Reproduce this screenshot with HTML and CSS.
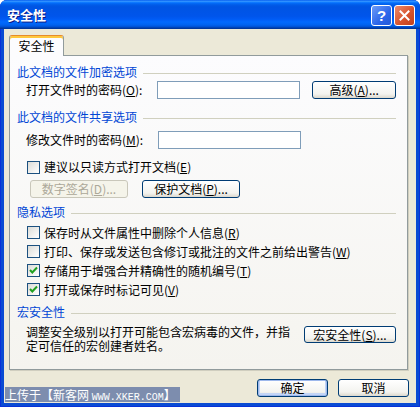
FILE: index.html
```html
<!DOCTYPE html>
<html>
<head>
    <meta charset="utf-8">
    <title>安全性</title>
    <link rel="stylesheet" href="styles.css">
</head>
<body>
    <div class="window">
        <div class="titlebar">
            <span class="title">安全性</span>
            <div class="title-buttons">
                <span class="tb-btn help">?</span>
                <span class="tb-btn close">
                    <svg width="11" height="11" viewBox="0 0 11 11"><path d="M1.5 1.5 L9.5 9.5 M9.5 1.5 L1.5 9.5" stroke="#fff" stroke-width="2" stroke-linecap="square"/></svg>
                </span>
            </div>
        </div>

        <div class="client">
            <div class="tabs">
                <div class="tab active">安全性</div>
            </div>

            <div class="panel">
                <div class="group-title">此文档的文件加密选项</div>
                <div class="row field-row r1">
                    <label class="field-label">打开文件时的密码(<u>O</u>):</label>
                    <input type="password" class="textbox">
                    <button class="btn btn-adv">高级(<u>A</u>)...</button>
                </div>

                <div class="group-title g2">此文档的文件共享选项</div>
                <div class="row field-row r2">
                    <label class="field-label">修改文件时的密码(<u>M</u>):</label>
                    <input type="password" class="textbox">
                </div>
                <div class="row check-row r3">
                    <span class="check"></span>建议以只读方式打开文档(<u>E</u>)
                </div>
                <div class="row btn-row">
                    <button class="btn btn-wide" disabled>数字签名(<u>D</u>)...</button>
                    <button class="btn btn-wide btn-protect">保护文档(<u>P</u>)...</button>
                </div>

                <div class="group-title g3">隐私选项</div>
                <div class="checks">
                    <div class="row check-row">
                        <span class="check"></span>保存时从文件属性中删除个人信息(<u>R</u>)
                    </div>
                    <div class="row check-row">
                        <span class="check"></span>打印、保存或发送包含修订或批注的文件之前给出警告(<u>W</u>)
                    </div>
                    <div class="row check-row">
                        <span class="check checked"><svg width="11" height="11" viewBox="0 0 11 11"><path d="M2 5 L4.3 7.5 L9 2.5" fill="none" stroke="#21A121" stroke-width="2"/></svg></span>存储用于增强合并精确性的随机编号(<u>T</u>)
                    </div>
                    <div class="row check-row">
                        <span class="check checked"><svg width="11" height="11" viewBox="0 0 11 11"><path d="M2 5 L4.3 7.5 L9 2.5" fill="none" stroke="#21A121" stroke-width="2"/></svg></span>打开或保存时标记可见(<u>V</u>)
                    </div>
                </div>

                <div class="group-title g4">宏安全性</div>
                <div class="row macro-row">
                    <p class="macro-text">调整安全级别以打开可能包含宏病毒的文件，并指<br>定可信任的宏创建者姓名。</p>
                    <button class="btn btn-macro">宏安全性(<u>S</u>)...</button>
                </div>
            </div>

            <div class="footer">
                <button class="btn btn-dialog btn-default">确定</button>
                <button class="btn btn-dialog">取消</button>
            </div>
        </div>

        <div class="watermark">上传于【新客网 <span class="latin">WWW.XKER.COM</span>】</div>
    </div>
</body>
</html>
```

FILE: styles.css
```css
body {
    margin: 0;
    background: #fff;
    font-family: "Noto Sans CJK SC", sans-serif;
    font-size: 12px;
    color: #000;
}
.window {
    position: relative;
    width: 420px;
    height: 407px;
    display: flex;
    flex-direction: column;
    background: #0A4BD3;
    border-radius: 7px 7px 0 0;
    overflow: hidden;
    box-shadow: inset 1px 0 0 #0831D9, inset -1px 0 0 #0831D9, inset 0 -1px 0 #0831D9;
}
.titlebar {
    height: 29px;
    display: flex;
    align-items: flex-start;
    padding: 0 5px 0 7px;
    background: linear-gradient(to bottom, #0058EE 0%, #3593FF 4%, #288EFF 6%, #127DFF 8%, #036FFC 10%, #0262EE 14%, #0057E5 20%, #0054E3 24%, #0055EB 56%, #005BF5 66%, #026AFE 76%, #0062EF 86%, #0052D6 92%, #0040AB 96%, #003092 100%);
}
.title {
    flex: 1;
    color: #fff;
    font-weight: bold;
    font-size: 13px;
    line-height: 29px;
    text-shadow: 1px 1px 0 #0A1883;
}
.title-buttons {
    display: flex;
    gap: 2px;
    padding-top: 5px;
}
.tb-btn {
    width: 21px;
    height: 21px;
    box-sizing: border-box;
    border: 1px solid #fff;
    border-radius: 3px;
    display: flex;
    align-items: center;
    justify-content: center;
}
.help {
    background: linear-gradient(135deg, #6D9CF8, #2C66EA 60%, #2359D8);
    color: #fff;
    font-family: "Liberation Sans", sans-serif;
    font-weight: bold;
    font-size: 15px;
    line-height: 19px;
}
.close {
    background: linear-gradient(135deg, #EC8A6C, #D8542E 55%, #C0401C);
}
.client {
    flex: 1;
    margin: 0 4px 4px;
    padding: 6px 8px 0 5px;
    background: #ECE9D8;
    display: flex;
    flex-direction: column;
}
.tabs {
    display: flex;
    height: 20px;
}
.tab {
    position: relative;
    z-index: 1;
    width: 55px;
    height: 21px;
    box-sizing: border-box;
    border: 1px solid #919B9C;
    border-top: 1px solid #E68B2C;
    border-bottom: none;
    border-radius: 3px 3px 0 0;
    background: #FCFCFE;
    box-shadow: inset 0 2px 0 #FFC83C;
    text-align: center;
    line-height: 20px;
}
.panel {
    height: 315px;
    box-sizing: border-box;
    border: 1px solid #919B9C;
    background: linear-gradient(to bottom, #FCFCFE, #F5F4EF);
    box-shadow: 1px 1px 0 #D0CEBF;
    padding: 9px 11px 0 7px;
}
.group-title {
    display: flex;
    align-items: center;
    height: 14px;
    line-height: 14px;
    color: #0046D5;
}
.group-title::after {
    content: "";
    flex: 1;
    margin: 2px 0 0 6px;
    border-top: 1px solid #D0D0BF;
}
.g2 { margin-top: 11px; }
.g3 { margin-top: 7px; }
.g4 { margin-top: 6px; }
.row {
    display: flex;
    align-items: center;
}
.field-row {
    height: 18px;
    padding-left: 9px;
}
.r1 { margin-top: 2px; }
.r2 { margin-top: 7px; }
.field-label {
    width: 132px;
    line-height: 14px;
}
.textbox {
    width: 143px;
    height: 18px;
    box-sizing: border-box;
    margin: 0;
    padding: 0 2px;
    border: 1px solid #7F9DB9;
    background: #fff;
}
.btn {
    height: 18px;
    box-sizing: border-box;
    margin: 0;
    padding: 0;
    border: 1px solid #003C74;
    border-radius: 3px;
    background: linear-gradient(to bottom, #FFFFFF, #F3F3EF 75%, #DCD8CD);
    font-family: inherit;
    font-size: 12px;
    line-height: 16px;
    color: #000;
}
.btn:disabled {
    border-color: #C9C7BA;
    background: #F5F4EA;
    color: #ACA899;
}
.btn-adv {
    width: 84px;
    margin-left: 12px;
}
.check-row {
    height: 19px;
    padding-left: 10px;
    line-height: 14px;
}
.r3 {
    height: 18px;
    margin-top: 9px;
}
.check {
    width: 13px;
    height: 13px;
    box-sizing: border-box;
    margin-right: 4px;
    border: 1px solid #1C5180;
    background: linear-gradient(135deg, #DCDCD7, #FFFFFF);
    display: flex;
    align-items: center;
    justify-content: center;
}
.btn-row {
    height: 18px;
    margin-top: 4px;
    padding-left: 13px;
}
.btn-wide {
    width: 98px;
}
.btn-protect {
    margin-left: 14px;
}
.checks {
    margin-top: 4px;
}
.macro-row {
    align-items: flex-start;
    margin-top: 6px;
    padding-left: 9px;
}
.macro-text {
    width: 264px;
    margin: 0;
    line-height: 14px;
    white-space: nowrap;
}
.btn-macro {
    width: 93px;
    height: 17px;
    margin: 1px 0 0 14px;
    line-height: 15px;
}
.footer {
    display: flex;
    justify-content: flex-end;
    gap: 10px;
    margin: 9px -1px 0 0;
}
.btn-dialog {
    width: 71px;
}
.btn-default {
    box-shadow: inset 0 0 0 1px #9DB8EC, inset 0 -1px 0 2px #C3D5F6;
}
u {
    text-decoration: underline;
}
.watermark {
    position: absolute;
    left: 5px;
    top: 387px;
    width: 175px;
    height: 15px;
    background: #7D8DAE;
    color: #fff;
    line-height: 15px;
    white-space: nowrap;
    overflow: hidden;
}
.latin {
    font-family: "Liberation Mono", monospace;
    font-size: 10px;
}
```
